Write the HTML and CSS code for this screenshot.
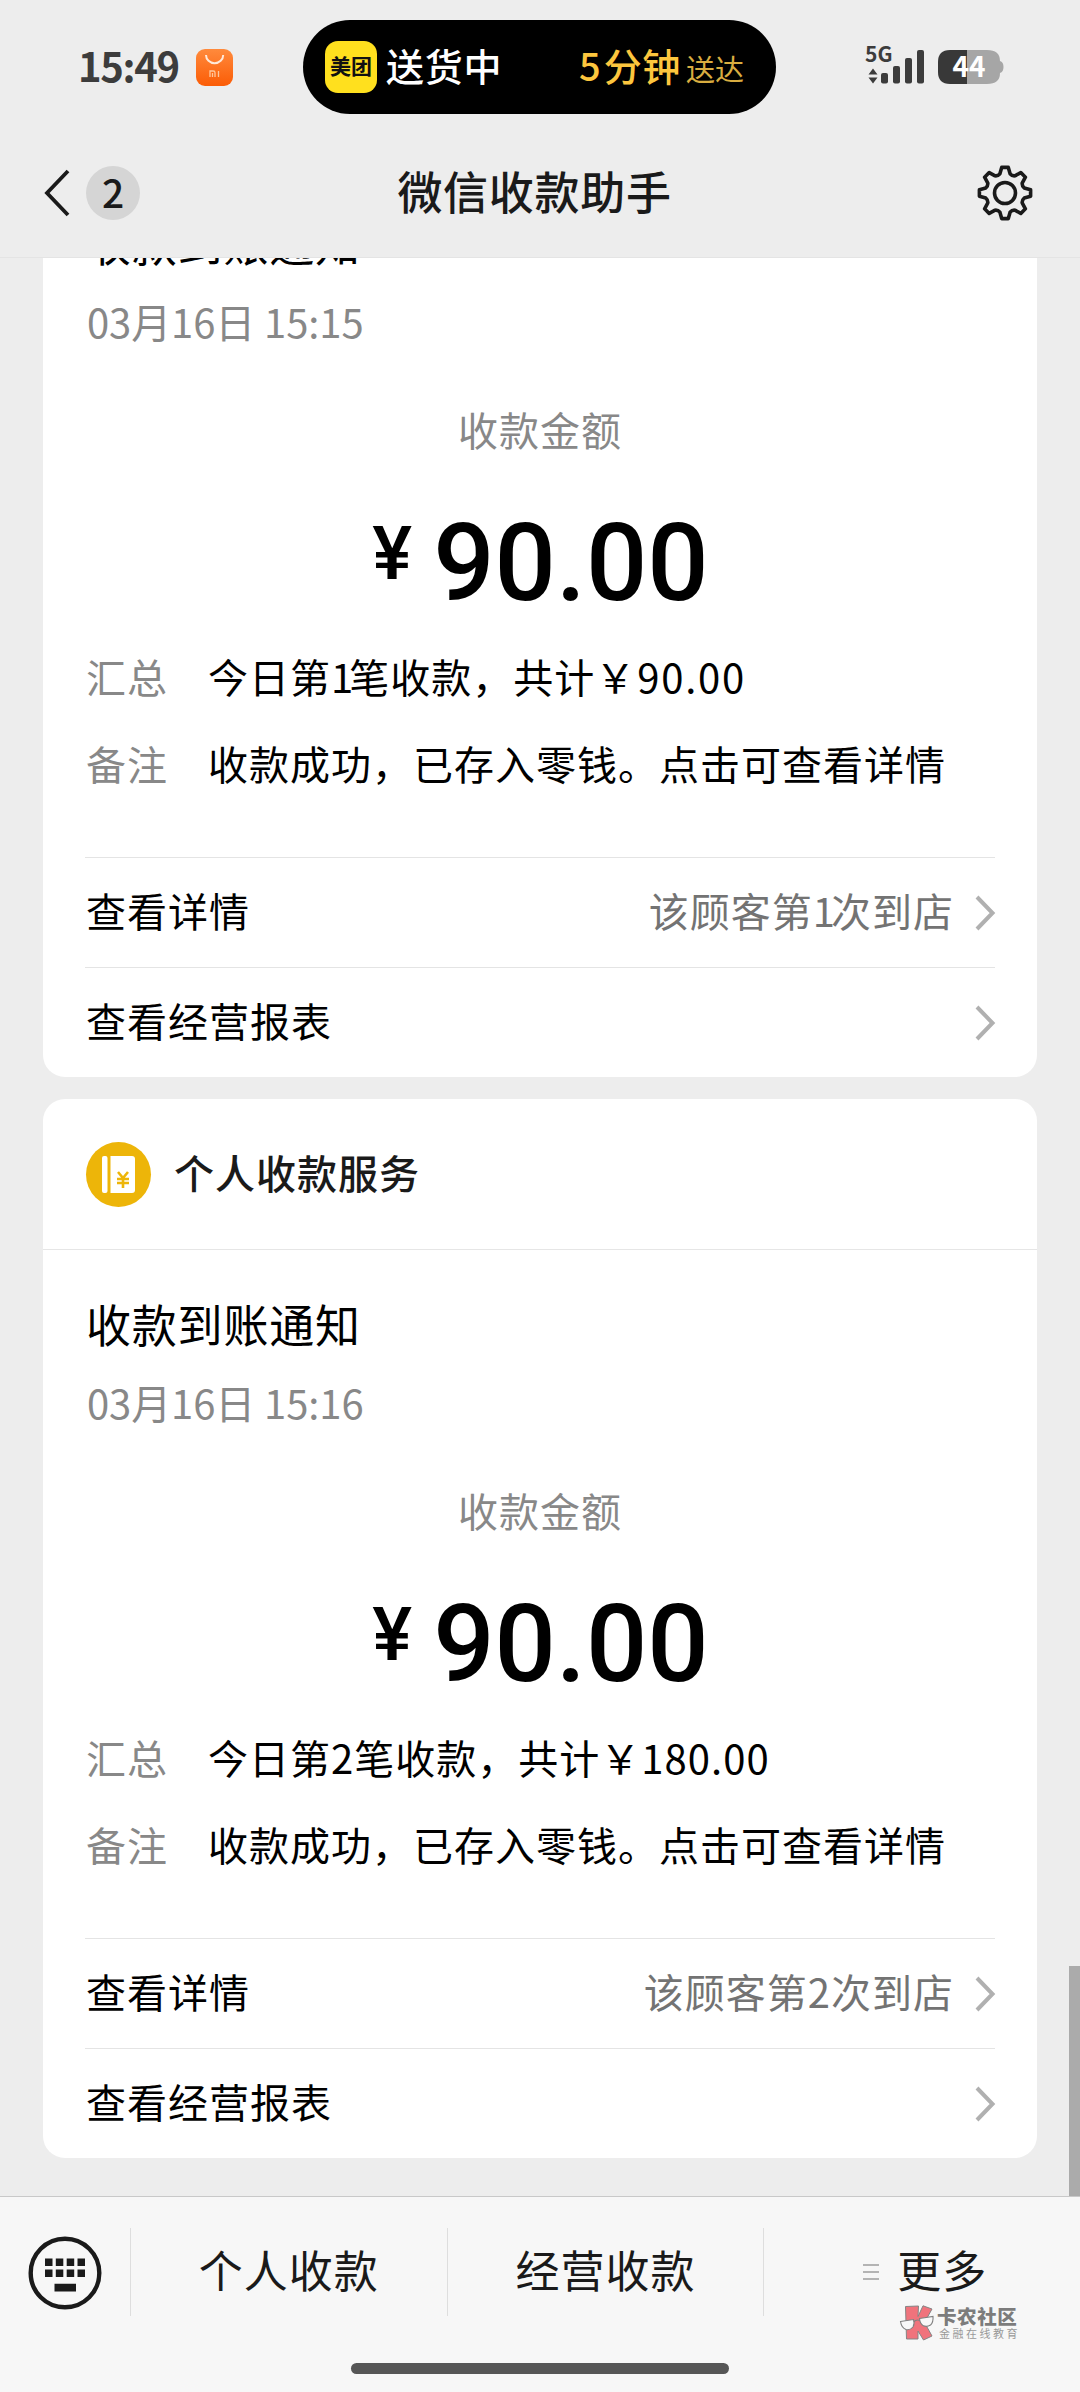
FILE: index.html
```html
<!DOCTYPE html>
<html lang="zh-CN">
<head>
<meta charset="utf-8">
<title>微信收款助手</title>
<link rel="stylesheet" href="styles.css">
</head>
<body>
<div class="phone">
  <header class="top">
    <div class="status">
      <div class="status-left">
        <span class="clock">15:49</span>
        <svg class="mi" width="37" height="37" viewBox="0 0 37 37"><defs><linearGradient id="mi" x1="0" y1="0" x2="0" y2="1"><stop offset="0" stop-color="#ff8a3c"/><stop offset="1" stop-color="#fb5c06"/></linearGradient></defs><rect width="37" height="37" rx="9" fill="url(#mi)"/><path d="M10 6a8.6 8.2 0 0 0 17.200 0" fill="none" stroke="#ffe9d8" stroke-width="2"/><path d="M14 28v-6h3.200q1.800 0 1.800 1.800V28M16.500 24v4M22.500 22v6" fill="none" stroke="#ffc79c" stroke-width="1.300"/></svg>
      </div>
      <div class="island">
        <span class="meituan">美团</span>
        <span class="delivering">送货中</span>
        <span class="eta">5<b>分钟</b></span><span class="eta-note">送达</span>
      </div>
      <div class="status-right">
        <svg width="60" height="42" viewBox="0 0 60 42"><text class="net" x="-1" y="19">5G</text><path fill="#3c3c3c" d="M2.500 31.500l4.500-6 4.500 6zM2.500 34.500l4.500 6 4.500-6z"/><g fill="#3c3c3c"><rect x="15" y="30" width="7" height="10.500" rx="2"/><rect x="27" y="23" width="7" height="17.500" rx="2"/><rect x="39" y="15" width="7" height="25.500" rx="2"/><rect x="51" y="7" width="7" height="33.500" rx="2"/></g></svg>
        <svg class="battery" width="66" height="34" viewBox="0 0 66 34"><path fill="#a6a6a6" d="M29 0h20q13 0 13 11 3.500 1 3.500 6t-3.500 6q0 11-13 11H29z"/><path fill="#383838" d="M29 0H12Q0 0 0 12v10q0 12 12 12h17z"/><text class="level" x="31" y="27" text-anchor="middle">44</text></svg>
      </div>
    </div>
    <div class="nav">
      <svg class="back" width="28" height="48" viewBox="0 0 28 48"><path d="M25 2L4 24l21 22" fill="none" stroke="#1a1a1a" stroke-width="3.800"/></svg>
      <span class="unread">2</span>
      <h1>微信收款助手</h1>
      <svg class="gear" width="56" height="56" viewBox="-28 -28 56 56"><g fill="none" stroke="#1a1a1a" stroke-width="3.600" stroke-linejoin="round"><circle r="10.500"/><path d="M-3.300 -25.600L3.300 -25.600L5.100 -19.200Q7 -16.900 9.900 -17.200L15.800 -20.400L20.400 -15.800L17.200 -9.900Q16.900 -7 19.200 -5.100L25.600 -3.300L25.600 3.300L19.200 5.100Q16.900 7 17.200 9.900L20.400 15.800L15.800 20.400L9.900 17.200Q7 16.900 5.100 19.200L3.300 25.600L-3.300 25.600L-5.100 19.200Q-7 16.900 -9.900 17.200L-15.800 20.400L-20.400 15.800L-17.200 9.900Q-16.900 7 -19.200 5.100L-25.600 3.300L-25.600 -3.300L-19.200 -5.100Q-16.900 -7 -17.200 -9.900L-20.400 -15.800L-15.800 -20.400L-9.900 -17.200Q-7 -16.900 -5.100 -19.200Z"/></g></svg>
    </div>
  </header>

  <main class="feed">
    <article class="card">
      <div class="card-head">
        <svg width="65" height="65" viewBox="0 0 65 65"><circle cx="32.500" cy="32.500" r="32.500" fill="#edb509"/><rect x="16" y="14" width="5.500" height="37" rx="2" fill="#fff"/><path d="M24.500 14H46q3 0 3 3v31q0 3-3 3H24.500z" fill="#fff"/><path d="M32 30l5 6 5-6M31 37h12M31 41h12M37 36v10" fill="none" stroke="#edb509" stroke-width="2.600"/></svg>
        <span>个人收款服务</span>
      </div>
      <div class="card-body">
        <h2>收款到账通知</h2>
        <time>03月16日 15:15</time>
        <p class="caption">收款金额</p>
        <p class="amount"><span class="yen">¥</span>90.00</p>
        <dl>
          <dt>汇总</dt><dd>今日第<span class="one">1</span>笔收款，共计￥<span class="num wide">90.00</span></dd>
          <dt>备注</dt><dd>收款成功，已存入零钱。点击可查看详情</dd>
        </dl>
        <div class="link"><span>查看详情</span><span class="hint">该顾客第<span class="one">1</span>次到店</span><svg width="20" height="38" viewBox="0 0 20 38"><path d="M2 3l15.500 16L2 35" fill="none" stroke="#b0b0b0" stroke-width="4"/></svg></div>
        <div class="link"><span>查看经营报表</span><svg width="20" height="38" viewBox="0 0 20 38"><path d="M2 3l15.500 16L2 35" fill="none" stroke="#b0b0b0" stroke-width="4"/></svg></div>
      </div>
    </article>
    <article class="card">
      <div class="card-head">
        <svg width="65" height="65" viewBox="0 0 65 65"><circle cx="32.500" cy="32.500" r="32.500" fill="#edb509"/><rect x="16" y="14" width="5.500" height="37" rx="2" fill="#fff"/><path d="M24.500 14H46q3 0 3 3v31q0 3-3 3H24.500z" fill="#fff"/><path d="M32 30l5 6 5-6M31 37h12M31 41h12M37 36v10" fill="none" stroke="#edb509" stroke-width="2.600"/></svg>
        <span>个人收款服务</span>
      </div>
      <div class="card-body">
        <h2>收款到账通知</h2>
        <time>03月16日 15:16</time>
        <p class="caption">收款金额</p>
        <p class="amount"><span class="yen">¥</span>90.00</p>
        <dl>
          <dt>汇总</dt><dd>今日第2笔收款，共计￥<span class="num">180.00</span></dd>
          <dt>备注</dt><dd>收款成功，已存入零钱。点击可查看详情</dd>
        </dl>
        <div class="link"><span>查看详情</span><span class="hint">该顾客第2次到店</span><svg width="20" height="38" viewBox="0 0 20 38"><path d="M2 3l15.500 16L2 35" fill="none" stroke="#b0b0b0" stroke-width="4"/></svg></div>
        <div class="link"><span>查看经营报表</span><svg width="20" height="38" viewBox="0 0 20 38"><path d="M2 3l15.500 16L2 35" fill="none" stroke="#b0b0b0" stroke-width="4"/></svg></div>
      </div>
    </article>
    <div class="scrollbar"></div>
  </main>

  <footer class="bottom">
    <div class="menu">
      <div class="keyboard"><svg width="74" height="74" viewBox="0 0 74 74"><circle cx="37" cy="37" r="34.300" fill="none" stroke="#1a1a1a" stroke-width="4.400"/><g fill="#1a1a1a"><path d="M17 22.500h7.500v7.500H17zM27.800 22.500h7.500v7.500h-7.500zM38.700 22.500h7.500v7.500h-7.500zM49.500 22.500H57v7.500h-7.500zM17 33.500h7.500V41H17zM27.800 33.500h7.500V41h-7.500zM38.700 33.500h7.500V41h-7.500zM49.500 33.500H57V41h-7.500zM26.500 47.800H48v7.700H26.500z"/></g></svg></div>
      <div class="tab">个人收款</div>
      <div class="tab">经营收款</div>
      <div class="tab more"><svg width="16" height="18" viewBox="0 0 16 18"><path d="M0 2h16M0 9h16M0 16h16" stroke="#b4b4b4" stroke-width="2.200"/></svg><span>更多</span></div>
    </div>
    <div class="home"></div>
    <div class="watermark">
      <svg width="36" height="36" viewBox="0 0 36 36"><path d="M6.500 1.500L19.500 1l-.5 10.500L24 .8l9 3.200-7.500 13.500L33 31l-8.500 4L19 26v8H7.500z" fill="#f0737c" stroke="#858585" stroke-linejoin="round"/><g fill="#f8f8f8" stroke="#808080" stroke-width="1.100"><path d="M1.500 16.500l13-2q1.500 4-.5 7.500-3 3.500-7 2.500-4.500-1.500-5.500-8zM20.500 13.500L34 11.500q.5 6-2.500 8.500-4 2.500-7.500.5-3-2-3.500-7z"/><path d="M14.800 17q2.500-3 6-1.500" fill="none"/></g></svg>
      <div class="mark-text"><b>卡农社区</b><i>金融在线教育</i></div>
    </div>
  </footer>
</div>
</body>
</html>
```
FILE: styles.css
```css
* { box-sizing: border-box; margin: 0; padding: 0; }
body { font-family: "Noto Sans CJK SC", sans-serif; background: #ededed; color: #000; }
svg { display: block; flex: none; overflow: visible; }
.phone { width: 1080px; height: 2392px; display: flex; flex-direction: column; overflow: hidden; }

.top { flex: none; height: 258px; padding-top: 20px; border-bottom: 1px solid #e4e4e4; }
.status { display: flex; height: 94px; }
.status-left { width: 303px; padding-left: 78px; display: flex; align-items: center; color: #3c3c3c; }
.clock { width: 118px; font-size: 40px; font-weight: 700; letter-spacing: -1.300px; line-height: 60px; margin-top: -4px; }
.island { width: 473px; border-radius: 47px; background: #000; display: flex; align-items: center; padding-left: 22px; white-space: nowrap; line-height: 60px; }
.meituan { width: 52px; height: 52px; border-radius: 13px; background: #ffe01e; color: #111; font-size: 21px; font-weight: 700; line-height: 49px; text-align: center; margin-right: 9px; }
.delivering { width: 193px; font-size: 38px; letter-spacing: .7px; font-weight: 500; color: #fff; margin-top: -4px; }
.eta { width: 107px; font-size: 38px; font-weight: 500; color: #fcc63e; margin-top: -4px; }
.eta b { font-weight: 500; letter-spacing: .5px; margin-left: 3px; }
.eta-note { font-size: 29px; color: #d9ad40; margin-top: 1px; }
.status-right { display: flex; padding: 23px 0 0 90px; }
.net { font: 700 21px "Noto Sans CJK SC", sans-serif; fill: #3c3c3c; }
.level { font: 700 28px "Noto Sans CJK SC", sans-serif; fill: #fff; }
.battery { margin: 7px 0 0 12px; }

.nav { height: 54px; margin-top: 52px; padding: 0 47px 0 43px; display: flex; align-items: center; }
.unread { width: 54px; height: 54px; margin-left: 15px; border-radius: 50%; background: #d5d5d5; color: #1a1a1a; font-size: 39px; font-weight: 500; line-height: 50px; text-align: center; }
.nav h1 { flex: 1; text-align: center; font-size: 45px; letter-spacing: .7px; font-weight: 500; line-height: 60px; color: #1a1a1a; margin: -5px 51px 0 0; padding-left: 3px; }

.feed { flex: 1; min-height: 0; position: relative; overflow: hidden; display: flex; flex-direction: column; justify-content: flex-end; gap: 22px; padding: 0 43px 38px; }
.card { flex: none; height: 1059px; background: #fff; border-radius: 22px; font-size: 40px; letter-spacing: 1px; }
.card-head { height: 151px; padding-left: 43px; display: flex; align-items: center; gap: 23px; border-bottom: 1px solid #e6e6e6; font-weight: 500; color: #1a1a1a; line-height: 60px; }
.card-head span { margin-top: -5px; }
.card-body { padding: 44px 42px 0; }
h2 { font-size: 45px; letter-spacing: .8px; font-weight: 400; line-height: 60px; margin-left: 1px; }
time { display: block; color: #888; letter-spacing: -.1px; line-height: 56px; margin: 20px 0 0 2px; }
.caption { color: #888; text-align: center; line-height: 56px; margin-top: 52px; }
.amount { display: flex; justify-content: center; font: 500 108px/110px Roboto, sans-serif; letter-spacing: 0; margin: 51px 0 0 1px; }
.yen { font-size: 75px; line-height: 91px; margin-right: 21px; }
dl { display: grid; grid-template-columns: 122px 1fr; line-height: 56px; row-gap: 31px; margin: 30px 0 66px 1px; white-space: nowrap; }
dt { color: #888; }
.one { letter-spacing: -4px; }
.num { letter-spacing: 1.100px; }
.wide { letter-spacing: 1.800px; margin-left: 1px; }
.link { display: flex; align-items: center; height: 110px; border-top: 1px solid #e4e4e4; }
.link > span:first-child { flex: 1; margin: -5px 0 0 1px; }
.hint { color: #737373; margin: -5px 21px 0 0; }
.scrollbar { position: absolute; right: 0; bottom: 0; width: 11px; height: 230px; background: #ababab; }

.bottom { flex: none; height: 196px; position: relative; background: #f7f7f7; border-top: 1px solid #c8c8c8; }
.menu { display: flex; height: 88px; margin-top: 31px; }
.keyboard { width: 130px; padding: 8px 0 0 28px; }
.tab { width: 316.600px; border-left: 1px solid #dedede; text-align: center; font-size: 44px; letter-spacing: 1px; line-height: 82px; color: #1a1a1a; }
.more { display: flex; align-items: center; gap: 18px; padding-left: 99px; }
.more span { line-height: 50px; margin-top: -7px; }
.home { width: 378px; height: 11px; margin: 47px auto 0; border-radius: 6px; background: #565656; }
.watermark { position: absolute; left: 899px; top: 108px; display: flex; gap: 2px; }
.mark-text { display: flex; flex-direction: column; color: #7c7c7c; white-space: nowrap; }
.mark-text b { font-size: 19.500px; font-weight: 900; line-height: 22px; letter-spacing: .6px; }
.mark-text i { font-style: normal; font-size: 11px; letter-spacing: 2.500px; line-height: 14px; padding-left: 2px; margin-top: -1px; color: #999; }
```
